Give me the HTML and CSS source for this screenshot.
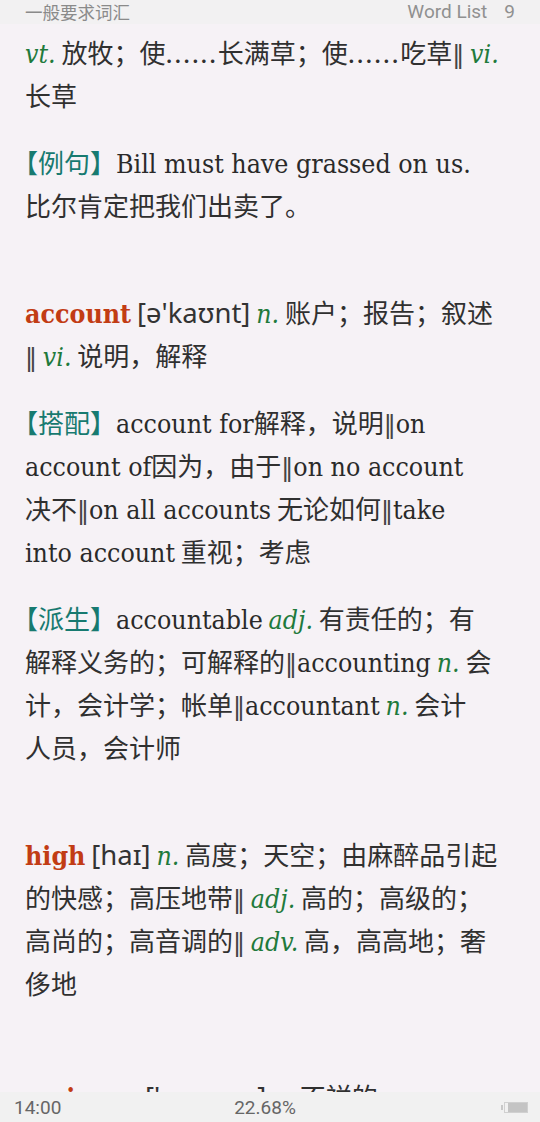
FILE: index.html
```html
<!DOCTYPE html>
<html lang="zh-CN">
<head>
<meta charset="utf-8">
<title>Word List</title>
<link rel="stylesheet" href="styles.css">
</head>
<body>
<div class="screen">
  <header class="topbar">
    <span class="book">一般要求词汇</span>
    <span class="chapter">Word List<span class="num">9</span></span>
  </header>
  <main class="content">
    <section class="entry">
      <p class="para"><i class="pos">vt.</i> 放牧；使<span class="dots">......</span>长满草；使<span class="dots">......</span>吃草<span class="sep">‖</span> <i class="pos">vi.</i><br>长草</p>
      <p class="para"><span class="tag">【例句】</span><span class="en">Bill must have grassed on us.</span><br>比尔肯定把我们出卖了。</p>
    </section>
    <section class="entry">
      <p class="para"><b class="head">account</b> <span class="ipa">[ə'kaʊnt]</span> <i class="pos">n.</i> 账户；报告；叙述<br><span class="sep">‖</span> <i class="pos">vi.</i> 说明，解释</p>
      <p class="para"><span class="tag">【搭配】</span><span class="en">account for</span>解释，说明<span class="sep">‖</span><span class="en">on</span><br><span class="en">account of</span>因为，由于<span class="sep">‖</span><span class="en">on no account</span><br>决不<span class="sep">‖</span><span class="en">on all accounts</span> 无论如何<span class="sep">‖</span><span class="en">take</span><br><span class="en">into account</span> 重视；考虑</p>
      <p class="para"><span class="tag">【派生】</span><span class="en">accountable</span> <i class="pos">adj.</i> 有责任的；有<br>解释义务的；可解释的<span class="sep">‖</span><span class="en">accounting</span> <i class="pos">n.</i> 会<br>计，会计学；帐单<span class="sep">‖</span><span class="en">accountant</span> <i class="pos">n.</i> 会计<br>人员，会计师</p>
    </section>
    <section class="entry">
      <p class="para"><b class="head">high</b> <span class="ipa">[haɪ]</span> <i class="pos">n.</i> 高度；天空；由麻醉品引起<br>的快感；高压地带<span class="sep">‖</span> <i class="pos">adj.</i> 高的；高级的；<br>高尚的；高音调的<span class="sep">‖</span> <i class="pos">adv.</i> 高，高高地；奢<br>侈地</p>
    </section>
    <section class="entry entry-peek">
      <p class="para"><b class="head">ominous</b> <span class="ipa">['ɒmɪnəs]</span> <i class="pos">a.</i> 不祥的</p>
    </section>
  </main>
  <footer class="statusbar">
    <span class="time">14:00</span>
    <span class="progress">22.68%</span>
    <span class="battery"><span class="nub"></span><span class="cell"><span class="level"></span></span></span>
  </footer>
</div>
</body>
</html>
```

FILE: styles.css
```css
html, body {
  margin: 0;
  padding: 0;
}
body {
  background: #f6f2f6;
  color: #333;
  font-family: "Noto Sans CJK SC", "Noto Sans", sans-serif;
}
.screen {
  width: 540px;
  height: 1122px;
  display: flex;
  flex-direction: column;
  overflow: hidden;
}
.topbar {
  height: 24px;
  flex: none;
  background: #f2f1f2;
  display: flex;
  align-items: center;
  justify-content: space-between;
  padding: 0 25px 0 25px;
  color: #8a8a8a;
}
.book {
  font-size: 17.5px;
  line-height: 24px;
}
.chapter {
  font-family: Roboto, "Noto Sans", sans-serif;
  font-size: 19px;
  line-height: 24px;
  color: #909090;
}
.chapter .num {
  margin-left: 17px;
}
.content {
  flex: 1;
  min-height: 0;
  overflow: hidden;
  padding: 6px 16px 0 25px;
  display: flex;
  flex-direction: column;
  gap: 64px;
}
.entry {
  display: flex;
  flex-direction: column;
  gap: 24px;
}
.entry-peek {
  margin-top: 6px;
}
.para {
  margin: 0;
  font-size: 26px;
  line-height: 43px;
  white-space: nowrap;
  color: #303030;
}
.para > span,
.para > i,
.para > b {
  line-height: 1;
}
.dots {
  letter-spacing: 1.5px;
}
.en {
  font-family: "DejaVu Serif", serif;
  font-stretch: condensed;
  font-size: 26.5px;
  color: #2a2a2a;
}
.pos {
  font-family: "DejaVu Serif", serif;
  font-stretch: condensed;
  font-style: italic;
  font-size: 26.5px;
  color: #1f7a3c;
}
.head {
  font-family: "DejaVu Serif", serif;
  font-stretch: condensed;
  font-weight: bold;
  font-size: 26.5px;
  color: #c23c14;
}
.ipa {
  font-family: "Noto Sans", sans-serif;
  font-size: 27.5px;
  color: #333;
}
.sep {
  font-family: "DejaVu Sans", sans-serif;
  font-size: 24px;
  color: #444;
}
.tag {
  color: #177a70;
  margin-left: -13px;
}
.statusbar {
  height: 30px;
  flex: none;
  background: #f1f1f1;
  display: grid;
  grid-template-columns: 1fr auto 1fr;
  align-items: center;
  padding: 0 12px 0 14px;
  color: #666;
  font-family: Roboto, "Noto Sans", sans-serif;
  font-size: 19px;
}
.progress {
  margin-left: -12px;
}
.battery {
  justify-self: end;
  display: flex;
  align-items: center;
}
.nub {
  width: 2px;
  height: 5px;
  background: #c8c8c8;
  margin-right: 1px;
}
.cell {
  width: 22px;
  height: 9px;
  border: 1px solid #d0d0d0;
  display: flex;
  justify-content: flex-end;
}
.level {
  width: 19px;
  background: #c4c4c4;
}
```
